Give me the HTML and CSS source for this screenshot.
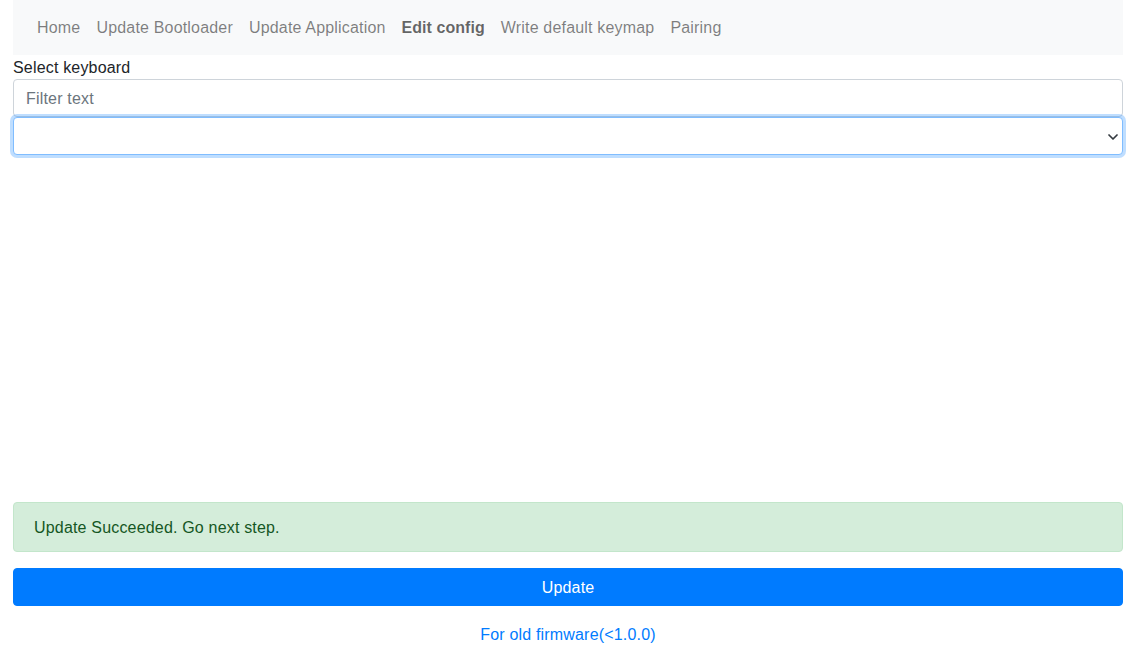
FILE: index.html
```html
<!DOCTYPE html>
<html>
<head>
<meta charset="utf-8">
<link rel="stylesheet" href="styles.css">
</head>
<body>
<div class="page">
  <nav class="navbar">
    <a class="nav-link" href="#">Home</a>
    <a class="nav-link" href="#">Update Bootloader</a>
    <a class="nav-link" href="#">Update Application</a>
    <a class="nav-link active" href="#">Edit config</a>
    <a class="nav-link" href="#">Write default keymap</a>
    <a class="nav-link" href="#">Pairing</a>
  </nav>
  <label class="label">Select keyboard</label>
  <input class="form-control" type="text" placeholder="Filter text">
  <div class="select-wrap">
    <select class="form-control select focus"></select>
    <svg class="chev" width="10" height="6" viewBox="0 0 10 6"><path d="M1 1 L5 5 L9 1" fill="none" stroke="#343a40" stroke-width="1.7" stroke-linecap="round" stroke-linejoin="round"/></svg>
  </div>
  <div class="spacer"></div>
  <div class="alert">Update Succeeded. Go next step.</div>
  <button class="btn">Update</button>
  <div class="old"><a href="#">For old firmware(&lt;1.0.0)</a></div>
</div>
</body>
</html>
```
FILE: styles.css
```css
html, body { margin: 0; padding: 0; background: #fff; }
body {
  font-family: "Liberation Sans", Arial, sans-serif;
  font-size: 16px;
  line-height: 24px;
  letter-spacing: 0.18px;
  color: #212529;
}
.page { padding: 0 16px 0 13px; }
.navbar {
  display: flex;
  align-items: center;
  height: 55px;
  box-sizing: border-box;
  padding: 1px 16px 0;
  background: #f8f9fa;
}
.nav-link {
  padding: 0 8px;
  color: rgba(0,0,0,.5);
  text-decoration: none;
  line-height: 24px;
}
.nav-link.active { color: rgba(0,0,0,.6); font-weight: bold; letter-spacing: 0.05px; }
.label { display: block; line-height: 24px; padding-top: 1px; margin-bottom: -1px; }
.form-control {
  display: block;
  width: 100%;
  height: 38px;
  box-sizing: border-box;
  padding: 7px 12px 5px;
  font-family: inherit;
  font-size: 16px;
  line-height: 24px;
  letter-spacing: 0.18px;
  color: #495057;
  background: #fff;
  border: 1px solid #ced4da;
  border-radius: 4px;
  margin: 0;
  outline: none;
}
.form-control::placeholder { color: #6c757d; opacity: 1; }
.select-wrap { position: relative; }
.select { appearance: none; -webkit-appearance: none; }
.select.focus {
  border-color: #80bdff;
  box-shadow: 0 0 0 3px rgba(0,123,255,.25);
}
.chev { position: absolute; right: 5px; top: 17px; }
.spacer { height: 347px; }
.alert {
  padding: 13px 20px 11px;
  background: #d4edda;
  border: 1px solid #c3e6cb;
  color: #155724;
  border-radius: 4px;
  margin-bottom: 16px;
}
.btn {
  display: block;
  width: 100%;
  height: 38px;
  border: 1px solid #007bff;
  background: #007bff;
  color: #fff;
  font-family: inherit;
  font-size: 16px;
  line-height: 24px;
  letter-spacing: 0.18px;
  border-radius: 4px;
  padding: 7px 12px 5px;
}
.old { text-align: center; margin-top: 16px; padding-top: 1px; }
.old a { color: #007bff; text-decoration: none; }
```
